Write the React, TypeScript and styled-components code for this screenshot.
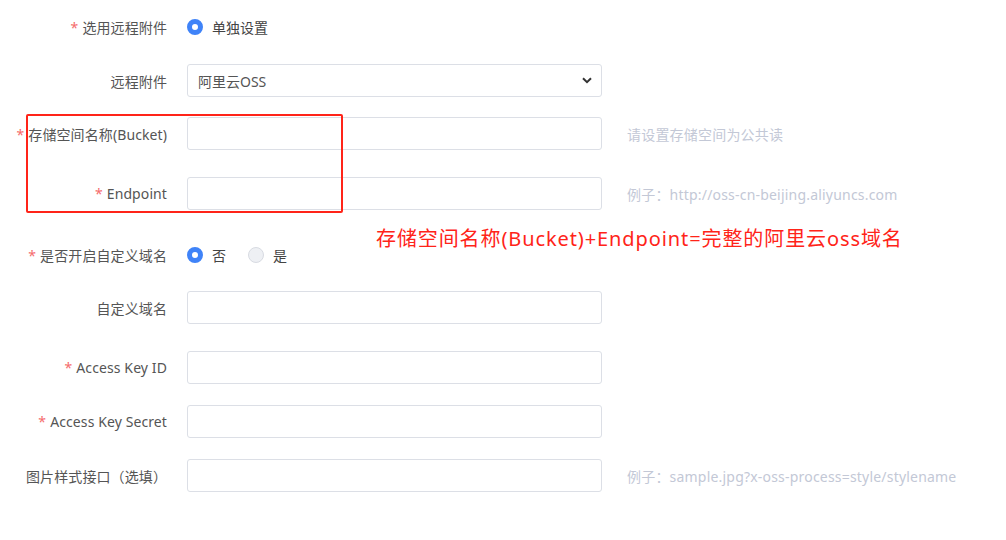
import React from "react";
import styled, { createGlobalStyle } from "styled-components";

const Global = createGlobalStyle`
  html, body { margin: 0; padding: 0; background: #fff; }
  body { font-family: "Noto Sans", "Noto Sans CJK SC", sans-serif; }
`;

const Page = styled.div`
  position: relative;
  width: 1006px;
  height: 540px;
  overflow: hidden;
`;

const Form = styled.div`
  display: flex;
  flex-direction: column;
  padding-top: 10px;
`;

const Row = styled.div<{ $mt: number }>`
  display: flex;
  align-items: center;
  height: 33px;
  margin-top: ${(p) => p.$mt}px;
`;

const Label = styled.div`
  width: 167px;
  flex: none;
  text-align: right;
  white-space: nowrap;
  font-size: 14px;
  color: #555;
  margin-right: 20px;
  direction: rtl;
  unicode-bidi: plaintext;
  letter-spacing: 0.1px;
`;

const LabelInner = styled.span`
  direction: ltr;
  unicode-bidi: isolate;
`;

const Star = styled.span`
  color: #f56c6c;
  margin-right: 4px;
`;

const Input = styled.div`
  box-sizing: border-box;
  width: 415px;
  height: 33px;
  border: 1px solid #dcdfe6;
  border-radius: 3px;
  background: #fff;
  flex: none;
`;

const Select = styled(Input)`
  display: flex;
  align-items: center;
  justify-content: space-between;
  padding: 0 9px 0 10px;
  font-size: 14px;
  color: #555;
`;

const Help = styled.div`
  margin-left: 25px;
  font-size: 14px;
  color: #c3c8d6;
  white-space: nowrap;
  letter-spacing: 0.2px;
`;

const RadioGroup = styled.div`
  display: flex;
  align-items: center;
  gap: 22px;
`;

const RadioItem = styled.label`
  display: flex;
  align-items: center;
  gap: 9px;
  font-size: 14px;
  color: #444;
`;

const RadioDot = styled.span<{ $on?: boolean }>`
  box-sizing: border-box;
  width: 16px;
  height: 16px;
  border-radius: 50%;
  background: ${(p) => (p.$on ? "#fff" : "#eef0f4")};
  border: ${(p) => (p.$on ? "5px solid #3f83f8" : "1px solid #d8dbe2")};
`;

const RedBox = styled.div`
  position: absolute;
  left: 26px;
  top: 114px;
  width: 317px;
  height: 99px;
  box-sizing: border-box;
  border: 2.5px solid #ff2419;
  border-radius: 2px;
`;

const Note = styled.div`
  position: absolute;
  left: 376px;
  top: 223px;
  font-size: 20px;
  color: #ff2419;
  white-space: nowrap;
  letter-spacing: 0.9px;
`;

const Chevron = () => (
  <svg width="10" height="7" viewBox="0 0 10 7">
    <path d="M1 1.2 L5 5.2 L9 1.2" fill="none" stroke="#333" strokeWidth="2" />
  </svg>
);

const L = ({ req, children }: { req?: boolean; children: React.ReactNode }) => (
  <Label>
    <LabelInner>
      {req && <Star>*</Star>}
      {children}
    </LabelInner>
  </Label>
);

export default function App() {
  return (
    <Page>
      <Global />
      <Form>
        <Row $mt={0}>
          <L req>选用远程附件</L>
          <RadioGroup>
            <RadioItem>
              <RadioDot $on />
              单独设置
            </RadioItem>
          </RadioGroup>
        </Row>
        <Row $mt={21}>
          <L>远程附件</L>
          <Select>
            <span>阿里云OSS</span>
            <Chevron />
          </Select>
        </Row>
        <Row $mt={20}>
          <L req>存储空间名称(Bucket)</L>
          <Input />
          <Help>请设置存储空间为公共读</Help>
        </Row>
        <Row $mt={27}>
          <L req>Endpoint</L>
          <Input />
          <Help>例子：http://oss-cn-beijing.aliyuncs.com</Help>
        </Row>
        <Row $mt={28}>
          <L req>是否开启自定义域名</L>
          <RadioGroup>
            <RadioItem>
              <RadioDot $on />
              否
            </RadioItem>
            <RadioItem>
              <RadioDot />
              是
            </RadioItem>
          </RadioGroup>
        </Row>
        <Row $mt={20}>
          <L>自定义域名</L>
          <Input />
        </Row>
        <Row $mt={27}>
          <L req>Access Key ID</L>
          <Input />
        </Row>
        <Row $mt={21}>
          <L req>Access Key Secret</L>
          <Input />
        </Row>
        <Row $mt={21}>
          <L>图片样式接口（选填）</L>
          <Input />
          <Help>例子：sample.jpg?x-oss-process=style/stylename</Help>
        </Row>
      </Form>
      <RedBox />
      <Note>存储空间名称(Bucket)+Endpoint=完整的阿里云oss域名</Note>
    </Page>
  );
}
